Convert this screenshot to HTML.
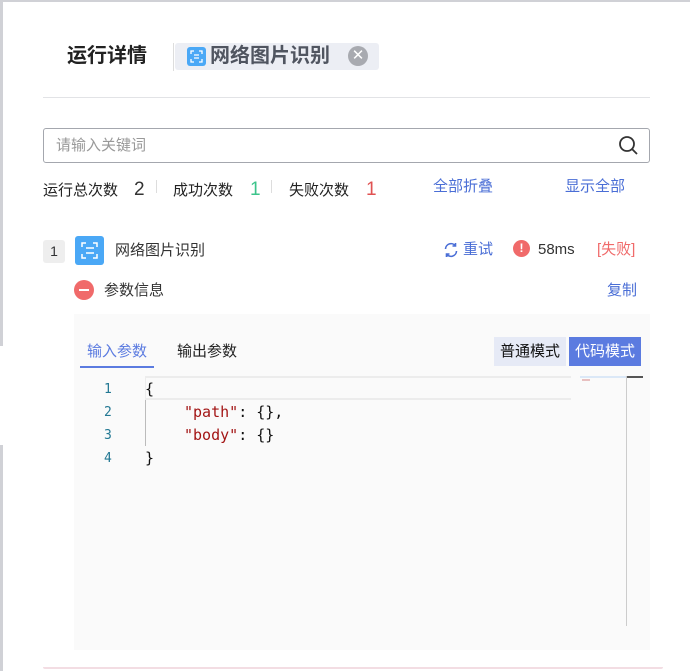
<!DOCTYPE html>
<html><head><meta charset="utf-8"><style>
*{margin:0;padding:0;box-sizing:border-box}
body{width:690px;height:671px;background:#fff;position:relative;overflow:hidden;font-family:"Liberation Sans","Noto Sans CJK SC",sans-serif;color:#303133}
.a{position:absolute;white-space:nowrap}
</style></head><body>
<div class="a" style="left:0;top:0;width:690px;height:2px;background:#d0d1d6"></div>
<div class="a" style="left:0;top:0;width:3px;height:346px;background:#d0d1d6"></div>
<div class="a" style="left:0;top:445px;width:3px;height:226px;background:#d0d1d6"></div>
<div class="a" style="left:43px;top:667px;width:620px;height:2px;background:#f3dde3;border-radius:0 0 6px 6px"></div>

<div class="a" style="left:67px;top:42px;font-size:20px;font-weight:bold;color:#222;line-height:28px">运行详情</div>
<div class="a" style="left:173px;top:43px;width:1px;height:28px;background:#ddd"></div>
<div class="a" style="left:175px;top:43px;width:204px;height:27px;background:#eceef4;border-radius:3px"></div>
<div class="a" style="left:187px;top:47px;width:19px;height:19px;background:#4aa8f6;border-radius:3px"></div>
<svg class="a" style="left:187px;top:47px" width="19" height="19" viewBox="0 0 19 19" fill="none" stroke="#fff" stroke-width="1.3"><path d="M4 7V4h3M12 4h3v3M15 12v3h-3M7 15H4v-3M7 8h5M7 11h5"/></svg>
<div class="a" style="left:210px;top:42px;font-size:20px;font-weight:bold;color:#505560;line-height:28px">网络图片识别</div>
<div class="a" style="left:348px;top:46px;width:20px;height:20px;border-radius:50%;background:#a8aab0;color:#fff;font-size:15px;line-height:20px;text-align:center">✕</div>

<div class="a" style="left:43px;top:97px;width:607px;height:1px;background:#e2e3e6"></div>

<div class="a" style="left:43px;top:128px;width:607px;height:35px;border:1px solid #a4a7ae;border-radius:3px"></div>
<div class="a" style="left:56px;top:136px;font-size:15px;color:#999;line-height:19px">请输入关键词</div>
<svg class="a" style="left:617px;top:134px" width="22" height="22" viewBox="0 0 22 22" fill="none" stroke="#333" stroke-width="1.8"><circle cx="10" cy="10" r="7"/><path d="M15 15l5 5"/></svg>

<div class="a" style="left:43px;top:181px;font-size:15px;line-height:20px;color:#222">运行总次数</div>
<div class="a" style="left:134px;top:178px;font-size:19px;line-height:24px;color:#333">2</div>
<div class="a" style="left:156px;top:180px;width:1px;height:13px;background:#ddd"></div>
<div class="a" style="left:173px;top:181px;font-size:15px;line-height:20px;color:#222">成功次数</div>
<div class="a" style="left:250px;top:178px;font-size:19px;line-height:24px;color:#3cc48b">1</div>
<div class="a" style="left:271px;top:180px;width:1px;height:13px;background:#ddd"></div>
<div class="a" style="left:289px;top:181px;font-size:15px;line-height:20px;color:#222">失败次数</div>
<div class="a" style="left:366px;top:178px;font-size:19px;line-height:24px;color:#e05252">1</div>
<div class="a" style="left:433px;top:177px;font-size:15px;line-height:20px;color:#4a6ed6">全部折叠</div>
<div class="a" style="left:565px;top:177px;font-size:15px;line-height:20px;color:#4a6ed6">显示全部</div>

<div class="a" style="left:43px;top:240px;width:22px;height:23px;background:#eee;border-radius:3px;font-size:14px;line-height:23px;text-align:center">1</div>
<div class="a" style="left:75px;top:236px;width:29px;height:29px;background:#4aa8f6;border-radius:3px"></div>
<svg class="a" style="left:75px;top:236px" width="29" height="29" viewBox="0 0 29 29" fill="none" stroke="#fff" stroke-width="1.5"><path d="M7 11V7h4M18 7h4v4M22 18v4h-4M11 22H7v-4M11 12h8M11 17h8"/></svg>
<div class="a" style="left:115px;top:241px;font-size:15px;line-height:20px;color:#333">网络图片识别</div>
<svg class="a" style="left:443px;top:242px" width="16" height="16" viewBox="0 0 16 16" fill="none" stroke="#4a6ed6" stroke-width="1.6"><path d="M2.5 7A5.5 5.5 0 0 1 12.5 4M13.5 9A5.5 5.5 0 0 1 3.5 12M12.5 1v3h-3M3.5 15v-3h3"/></svg>
<div class="a" style="left:463px;top:240px;font-size:15px;line-height:20px;color:#4a6ed6">重试</div>
<div class="a" style="left:513px;top:240px;width:17px;height:17px;border-radius:50%;background:#f06a6a;color:#fff;font-size:12px;font-weight:bold;line-height:17px;text-align:center">!</div>
<div class="a" style="left:538px;top:240px;font-size:15px;line-height:20px;color:#333">58ms</div>
<div class="a" style="left:597px;top:240px;font-size:15px;line-height:20px;color:#f06a6a">[失败]</div>

<div class="a" style="left:74px;top:280px;width:20px;height:20px;border-radius:50%;background:#f06a6a"></div>
<div class="a" style="left:79px;top:289px;width:10px;height:2px;background:#fff"></div>
<div class="a" style="left:104px;top:281px;font-size:15px;line-height:20px;color:#333">参数信息</div>
<div class="a" style="left:607px;top:281px;font-size:15px;line-height:20px;color:#4a6ed6">复制</div>

<div class="a" style="left:74px;top:314px;width:576px;height:336px;background:#fafafa"></div>
<div class="a" style="left:87px;top:342px;font-size:15px;line-height:20px;color:#5b7be0">输入参数</div>
<div class="a" style="left:80px;top:366px;width:74px;height:2px;background:#5b7be0"></div>
<div class="a" style="left:177px;top:342px;font-size:15px;line-height:20px;color:#222">输出参数</div>
<div class="a" style="left:494px;top:337px;width:72px;height:29px;background:#e6eaf6;font-size:15px;line-height:29px;text-align:center;color:#111">普通模式</div>
<div class="a" style="left:569px;top:337px;width:72px;height:29px;background:#5b7be0;font-size:15px;line-height:29px;text-align:center;color:#fff">代码模式</div>

<div class="a" style="left:145px;top:376px;width:426px;height:24px;border-top:2px solid #ececec;border-bottom:2px solid #ececec;border-left:1px solid #ececec"></div>
<div class="a" style="left:145px;top:400px;width:1px;height:46px;background:#bbb"></div>
<div class="a" style="left:580px;top:376px;width:46px;height:2px;background:#dbe8f7"></div>
<div class="a" style="left:626px;top:376px;width:17px;height:2px;background:#555"></div>
<div class="a" style="left:626px;top:376px;width:1px;height:250px;background:#ccc"></div>
<div class="a" style="left:582px;top:379px;width:8px;height:2px;background:#e8c0c0"></div>
<div style="position:absolute;left:0;top:378px;font-family:'DejaVu Sans Mono','Liberation Mono',monospace;font-size:15px;line-height:23px">
<div class="a" style="left:104px;top:0;font-size:13px;color:#237893">1</div>
<div class="a" style="left:104px;top:23px;font-size:13px;color:#237893">2</div>
<div class="a" style="left:104px;top:46px;font-size:13px;color:#237893">3</div>
<div class="a" style="left:104px;top:69px;font-size:13px;color:#237893">4</div>
<div class="a" style="left:145px;top:0;color:#111">{</div>
<div class="a" style="left:184px;top:23px;color:#111"><span style="color:#a31515">"path"</span>: {},</div>
<div class="a" style="left:184px;top:46px;color:#111"><span style="color:#a31515">"body"</span>: {}</div>
<div class="a" style="left:145px;top:69px;color:#111">}</div>
</div>
</body></html>
